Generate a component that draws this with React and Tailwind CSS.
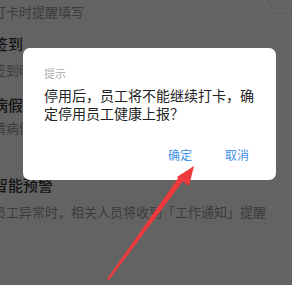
import React from "react";

const font = { fontFamily: '"Noto Sans CJK SC", "Noto Sans", sans-serif' };

export default function App() {
  return (
    <div className="relative h-[285px] w-[292px] overflow-hidden bg-[#636363]" style={font}>
      {/* dimmed settings page behind the dialog */}
      <div className="ml-[-7px] flex flex-col whitespace-nowrap">
        <div className="mt-[2px] text-[13px] leading-[20px] text-[#3b3b3b]">打卡时提醒填写</div>
        <div className="mt-[12px] text-[15px] font-medium leading-[20px] text-[#141414]">签到</div>
        <div className="mt-[6px] text-[13px] leading-[20px] text-[#3b3b3b]">签到时间范围内可打卡</div>
        <div className="mt-[15px] text-[15px] font-medium leading-[20px] text-[#141414]">病假</div>
        <div className="mt-[3px] text-[13px] leading-[20px] text-[#3b3b3b]">请病假时需要上传证明</div>
        <div className="mt-[37px] text-[15px] font-medium leading-[20px] text-[#141414]">智能预警</div>
        <div className="mt-[7px] text-[13px] leading-[20px] text-[#3b3b3b]">
          员工异常时，相关人员将收到「工作通知」提醒
        </div>
      </div>

      {/* partial control in the top right corner */}
      <div className="absolute left-[263px] top-[-20px] h-[32px] w-[34px] rounded-full border border-[#6e6e6e]" />

      {/* dialog */}
      <div className="absolute left-[23px] top-[48px] w-[253px] rounded-[7px] bg-white pb-[16px] pl-[21px] pt-[18px]">
        <div className="text-[11px] leading-[15px] text-[#ababab]">提示</div>
        <div className="mt-[5px] text-[14px] leading-[18px] text-[#222]">
          停用后，员工将不能继续打卡，确
          <br />
          定停用员工健康上报？
        </div>
        <div className="mt-[24px] flex justify-end gap-[33px] pr-[27px] text-[12px] leading-[18px] text-[#3d8ee6]">
          <span>确定</span>
          <span>取消</span>
        </div>
      </div>

      {/* red annotation arrow */}
      <svg className="absolute left-0 top-0" width="292" height="285" viewBox="0 0 292 285">
        <polygon points="107,279 109,280 186,177 181,174" fill="#ee3a3d" />
        <polygon points="194,166 177,177 189,186" fill="#ee3a3d" />
      </svg>
    </div>
  );
}
